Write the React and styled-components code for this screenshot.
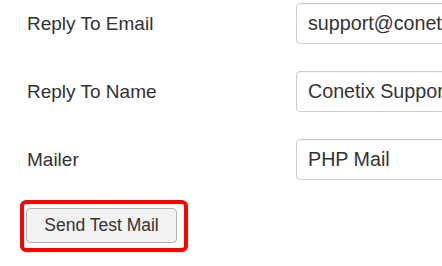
import React from "react";
import styled, { createGlobalStyle } from "styled-components";

const Global = createGlobalStyle`
  html, body { margin: 0; padding: 0; background: #fff; }
  body { overflow: hidden; font-family: "Liberation Sans", Arial, sans-serif; }
`;

const Page = styled.div`
  width: 442px;
  height: 266px;
  overflow: hidden;
  padding-top: 3px;
  box-sizing: border-box;
`;

const Form = styled.div`
  display: flex;
  flex-direction: column;
  gap: 27px;
`;

const Row = styled.div`
  display: grid;
  grid-template-columns: 296px 260px;
  align-items: center;
`;

const Label = styled.label`
  padding-left: 27px;
  font-size: 19px;
  color: #333;
`;

const Input = styled.div`
  box-sizing: border-box;
  height: 41px;
  border: 1px solid #ccc;
  border-radius: 4px;
  padding: 0 11px;
  display: flex;
  align-items: center;
  font-size: 19.7px;
  color: #333;
  white-space: nowrap;
  overflow: hidden;
  box-shadow: inset 0 1px 1px rgba(0,0,0,0.04);
`;

const Highlight = styled.div`
  margin: 20px 0 0 20px;
  width: 168px;
  box-sizing: border-box;
  border: 4px solid #f00;
  border-radius: 6px;
  padding: 4px 7px 5px 2px;
`;

const Button = styled.button`
  box-sizing: border-box;
  width: 151px;
  height: 35px;
  background: #f2f2f2;
  border: 1px solid #b3b3b3;
  border-radius: 4px;
  font-family: "Liberation Sans", Arial, sans-serif;
  font-size: 17.5px;
  color: #333;
  padding: 0;
  display: block;
`;

const fields = [
  { label: "Reply To Email", value: "support@conetix.com.au" },
  { label: "Reply To Name", value: "Conetix Support" },
  { label: "Mailer", value: "PHP Mail" },
];

export default function App() {
  return (
    <Page>
      <Global />
      <Form>
        {fields.map((f) => (
          <Row key={f.label}>
            <Label>{f.label}</Label>
            <Input>{f.value}</Input>
          </Row>
        ))}
      </Form>
      <Highlight>
        <Button>Send Test Mail</Button>
      </Highlight>
    </Page>
  );
}
